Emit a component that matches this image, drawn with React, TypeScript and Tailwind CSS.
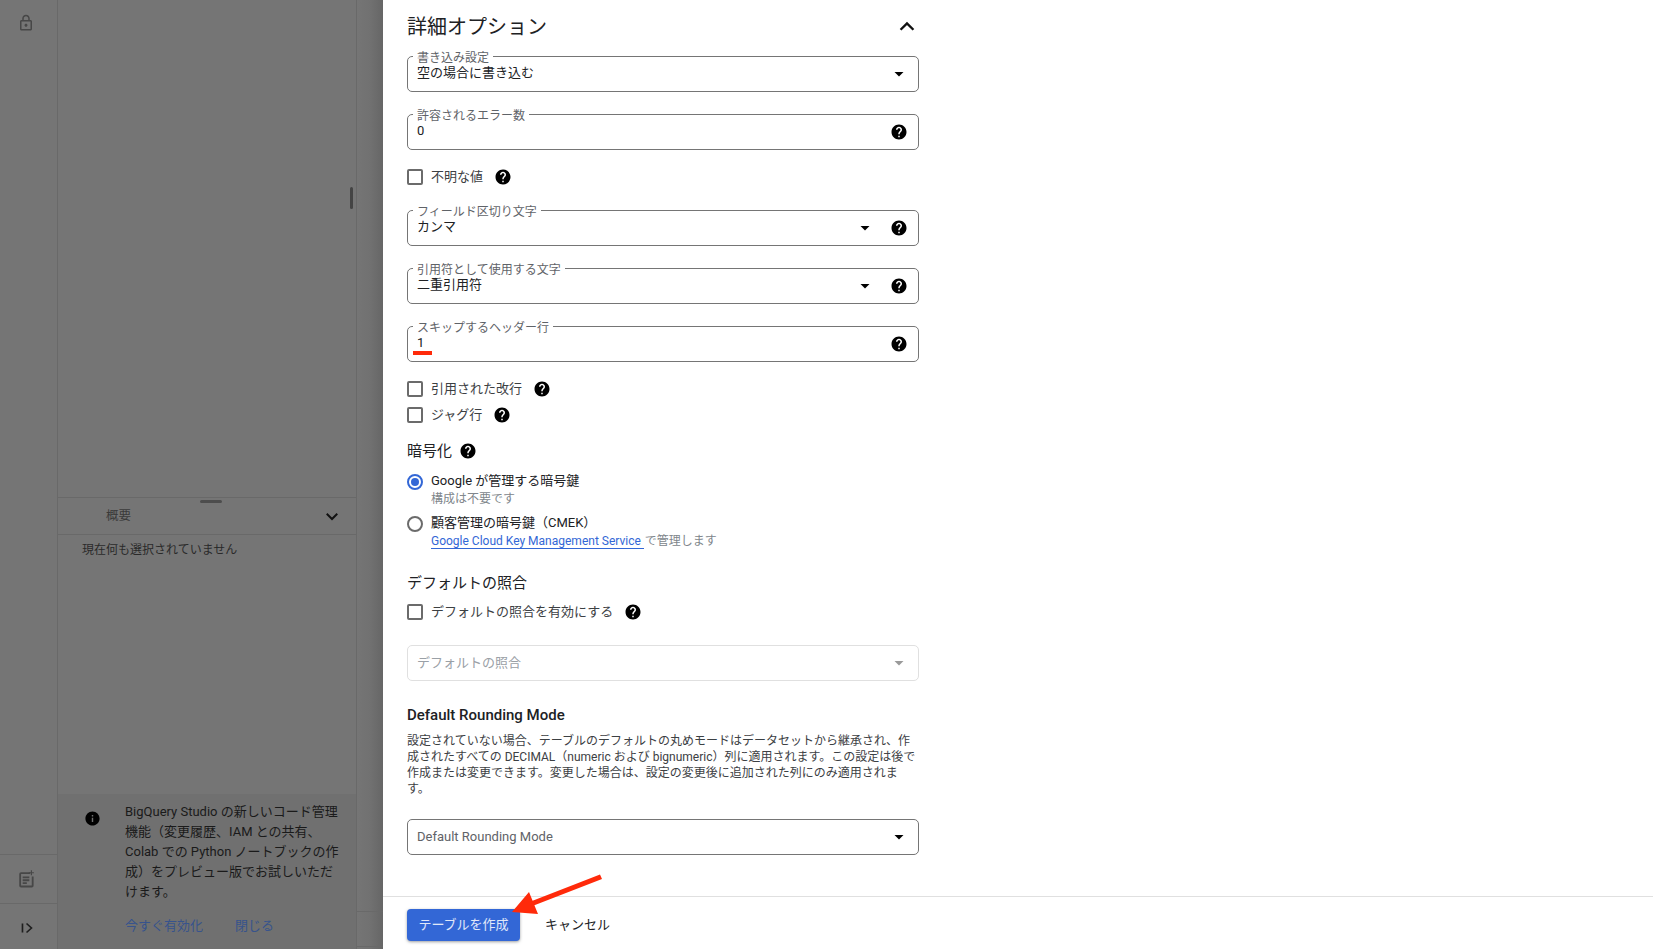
import React from "react";

const FONT = "font-['Roboto','Noto_Sans_CJK_JP',sans-serif]";

function Help({ className = "" }: { className?: string }) {
  return (
    <svg viewBox="0 0 24 24" className={`w-[18px] h-[18px] shrink-0 ${className}`} fill="#000">
      <path d="M12 2C6.48 2 2 6.48 2 12s4.48 10 10 10 10-4.48 10-10S17.52 2 12 2zm1 17h-2v-2h2v2zm2.07-7.75-.9.92C13.45 12.9 13 13.5 13 15h-2v-.5c0-1.1.45-2.1 1.17-2.83l1.24-1.26c.37-.36.59-.86.59-1.41 0-1.1-.9-2-2-2s-2 .9-2 2H8c0-2.21 1.79-4 4-4s4 1.79 4 4c0 .88-.36 1.68-.93 2.25z" />
    </svg>
  );
}

function Caret({ color = "bg-[#000]" }: { color?: string }) {
  return <div className={`w-[10px] h-[5px] ${color} [clip-path:polygon(0_0,100%_0,50%_100%)]`} />;
}

function Field({
  label,
  value,
  caret,
  help,
  className = "",
  underline,
}: {
  label?: string;
  value: string;
  caret?: boolean;
  help?: boolean;
  className?: string;
  underline?: boolean;
}) {
  return (
    <div className={`relative h-[36px] w-[512px] rounded-[5px] border border-[#757575] flex items-center pl-[9px] ${help ? "pr-[10px]" : "pr-[14px]"} ${className}`}>
      {label && (
        <span className="absolute left-[5px] top-[-6px] bg-white px-[4px] text-[12px] leading-[14px] text-[#5f6368]">{label}</span>
      )}
      <span className={`flex-1 text-[13px] leading-[16px] text-[#202124] ${label ? "mt-[-3px]" : ""}`}>{value}</span>
      {caret && <Caret />}
      {help && <Help className={caret ? "ml-[20px]" : ""} />}
      {underline && <div className="absolute left-[5px] top-[24px] w-[19px] h-[4px] bg-[#ff2a0a]" />}
    </div>
  );
}

function Check({ label, gap = "ml-[11px]", className = "" }: { label: string; gap?: string; className?: string }) {
  return (
    <div className={`flex items-center h-[20px] ${className}`}>
      <div className="w-[16px] h-[16px] rounded-[2px] border-2 border-[#6b6b6b] mr-[8px]" />
      <span className="text-[13px] text-[#3c4043]">{label}</span>
      <Help className={gap} />
    </div>
  );
}

export default function App() {
  return (
    <div className={`${FONT} w-[1653px] h-[949px] overflow-hidden flex bg-white`}>
      {/* dimmed page behind the drawer */}
      <div className="w-[383px] h-full flex shrink-0 bg-[#757575] relative">
        <div className="w-[58px] h-full border-r border-[#696969] flex flex-col">
          <div className="pr-[5px] flex justify-center">
            <svg viewBox="0 0 24 24" className="w-[18px] h-[18px] mt-[14px]" fill="#474747">
              <path d="M18 8h-1V6c0-2.76-2.24-5-5-5S7 3.24 7 6v2H6c-1.1 0-2 .9-2 2v10c0 1.1.9 2 2 2h12c1.1 0 2-.9 2-2V10c0-1.1-.9-2-2-2zM9 6c0-1.66 1.34-3 3-3s3 1.34 3 3v2H9V6zm9 14H6V10h12v10zm-6-3c1.1 0 2-.9 2-2s-.9-2-2-2-2 .9-2 2 .9 2 2 2z" />
            </svg>
          </div>
          <div className="flex-1" />
          <div className="w-full h-[49px] border-t border-[#696969] flex items-center justify-center pr-[5px] pb-[1px]">
            <svg viewBox="0 0 24 24" className="w-[20px] h-[20px]" fill="none" stroke="#474747" strokeWidth="2.2">
              <path d="M17 5H6a1 1 0 0 0-1 1v14a1 1 0 0 0 1 1h13a1 1 0 0 0 1-1V9" />
              <path d="M8 10h8M8 13.5h8M8 17h5" />
              <path d="M18.5 1.5v6M15.5 4.5h6" strokeWidth="1.4" />
            </svg>
          </div>
          <div className="w-full h-[46px] border-t border-[#696969] flex items-center justify-center pr-[5px] pt-[3px]">
            <svg viewBox="0 0 24 24" className="w-[18px] h-[18px]" fill="none" stroke="#1f1f1f" strokeWidth="2.2">
              <path d="M7.3 6v12M12.7 6l6.6 6-6.6 6" />
            </svg>
          </div>
        </div>
        <div className="w-[299px] h-full border-r border-[#696969] relative flex flex-col shrink-0">
          <div className="h-[498px] border-b border-[#696969] shrink-0 relative">
            <div className="absolute right-[3px] top-[187px] w-[3px] h-[22px] rounded-[2px] bg-[#444]" />
            <div className="absolute left-[142px] bottom-[-6px] w-[22px] h-[3px] rounded-[2px] bg-[#4d4d4d]" />
          </div>
          <div className="h-[37px] border-b border-[#696969] flex items-center pl-[48px] pr-[15px] shrink-0">
            <span className="flex-1 text-[12.5px] text-[#3a3a3a]">概要</span>
            <svg viewBox="0 0 24 24" className="w-[18px] h-[18px]" fill="none" stroke="#111" strokeWidth="2.6">
              <path d="M5 9l7 7 7-7" />
            </svg>
          </div>
          <div className="pl-[24px] pt-[6px] text-[12px] leading-[18px] text-[#2a2a2a] flex-1">現在何も選択されていません</div>
          <div className="h-[155px] bg-[#707070] shrink-0 flex pl-[26px] pr-[16px] pt-[8px]">
            <svg viewBox="0 0 24 24" className="w-[17px] h-[17px] shrink-0 mt-[8px]" fill="#000">
              <path d="M12 2C6.48 2 2 6.48 2 12s4.48 10 10 10 10-4.48 10-10S17.52 2 12 2zm1 15h-2v-6h2v6zm0-8h-2V7h2v2z" />
            </svg>
            <div className="ml-[24px]">
              <p className="text-[13px] leading-[20px] text-[#1a1a1a] w-[216px]">
                BigQuery Studio の新しいコード管理機能（変更履歴、IAM との共有、Colab での Python ノートブックの作成）をプレビュー版でお試しいただけます。
              </p>
              <div className="flex mt-[15px] text-[13px] leading-[18px] text-[#37538c]">
                <span>今すぐ有効化</span>
                <span className="ml-[32px]">閉じる</span>
              </div>
            </div>
          </div>
        </div>
        <div className="flex-1 relative bg-gradient-to-r from-[#757575] via-[#717171] to-[#666]">
          <div className="absolute left-0 right-0 top-[911px] h-px bg-[#696969]" />
          <div className="absolute left-0 right-0 top-[946px] h-px bg-[#696969]" />
        </div>
      </div>

      {/* drawer */}
      <div className="flex-1 h-full flex flex-col bg-white relative">
        <div className="h-[896px] pl-[24px] overflow-hidden shrink-0">
          <div className="w-[512px] h-[48px] flex items-center justify-between pr-[1px]">
            <span className="text-[20px] text-[#202124] mt-[6px]">詳細オプション</span>
            <svg viewBox="0 0 24 24" className="w-[22px] h-[22px] mt-[6px]" fill="none" stroke="#111" strokeWidth="2.6">
              <path d="M5 15l7-7 7 7" />
            </svg>
          </div>
          <Field className="mt-[8px]" label="書き込み設定" value="空の場合に書き込む" caret />
          <Field className="mt-[22px]" label="許容されるエラー数" value="0" help />
          <Check className="mt-[17px]" label="不明な値" />
          <Field className="mt-[23px]" label="フィールド区切り文字" value="カンマ" caret help />
          <Field className="mt-[22px]" label="引用符として使用する文字" value="二重引用符" caret help />
          <Field className="mt-[22px]" label="スキップするヘッダー行" value="1" help underline />
          <Check className="mt-[17px]" label="引用された改行" />
          <Check className="mt-[6px]" label="ジャグ行" />
          <div className="mt-[16px] flex items-center h-[20px]">
            <span className="text-[15px] text-[#202124]">暗号化</span>
            <Help className="ml-[7px]" />
          </div>
          <div className="mt-[11px] flex">
            <div className="w-[16px] h-[16px] rounded-full border-2 border-[#3367d6] flex items-center justify-center mt-[2px] mr-[8px]">
              <div className="w-[8px] h-[8px] rounded-full bg-[#3367d6]" />
            </div>
            <div>
              <div className="text-[13px] leading-[18px] text-[#202124]">Google が管理する暗号鍵</div>
              <div className="text-[12px] leading-[18px] text-[#80868b]">構成は不要です</div>
            </div>
          </div>
          <div className="mt-[6px] flex">
            <div className="w-[16px] h-[16px] rounded-full border-2 border-[#6b6b6b] mt-[2px] mr-[8px]" />
            <div>
              <div className="text-[13px] leading-[18px] text-[#202124]">顧客管理の暗号鍵（CMEK）</div>
              <div className="text-[12px] leading-[18px] text-[#80868b]">
                <span className="text-[#3367d6] border-b border-[#3367d6] pr-[3px] mr-[1px]">Google Cloud Key Management Service</span>で管理します
              </div>
            </div>
          </div>
          <div className="mt-[23px] text-[15px] leading-[20px] text-[#202124]">デフォルトの照合</div>
          <Check className="mt-[9px]" label="デフォルトの照合を有効にする" />
          <div className="mt-[23px] h-[36px] w-[512px] rounded-[5px] border border-[#e0e0e0] flex items-center pl-[9px] pr-[14px]">
            <span className="flex-1 text-[13px] text-[#9aa0a6]">デフォルトの照合</span>
            <Caret color="bg-[#9a9a9a]" />
          </div>
          <div className="mt-[24px] text-[15px] leading-[20px] font-medium text-[#202124]">Default Rounding Mode</div>
          <p className="mt-[8px] w-[512px] text-[12px] leading-[16px] text-[#3c4043]">
            設定されていない場合、テーブルのデフォルトの丸めモードはデータセットから継承され、作成されたすべての DECIMAL（numeric および bignumeric）列に適用されます。この設定は後で作成または変更できます。変更した場合は、設定の変更後に追加された列にのみ適用されます。
          </p>
          <div className="mt-[22px] h-[36px] w-[512px] rounded-[5px] border border-[#757575] flex items-center pl-[9px] pr-[14px]">
            <span className="flex-1 text-[13px] text-[#5f6368]">Default Rounding Mode</span>
            <Caret />
          </div>
        </div>
        <div className="flex-1 border-t border-[#e0e0e0] pl-[24px] pt-[12px] flex items-start">
          <div className="w-[113px] h-[32px] rounded-[4px] bg-[#3367d6] shadow-[0_1px_3px_rgba(60,64,67,0.5)] flex items-center justify-center text-[13px] text-white/85">テーブルを作成</div>
          <span className="ml-[25px] mt-[6px] text-[13px] text-[#202124]">キャンセル</span>
        </div>
        {/* annotation arrow */}
        <svg className="absolute left-[120px] top-[868px] w-[100px] h-[50px]" viewBox="0 0 100 50" fill="#ff2a0a">
          <path d="M9 44 L26 24 L29.6 32.7 L97 6.4 L99 11 L31.4 37.3 L35 46 Z" />
        </svg>
      </div>
    </div>
  );
}
